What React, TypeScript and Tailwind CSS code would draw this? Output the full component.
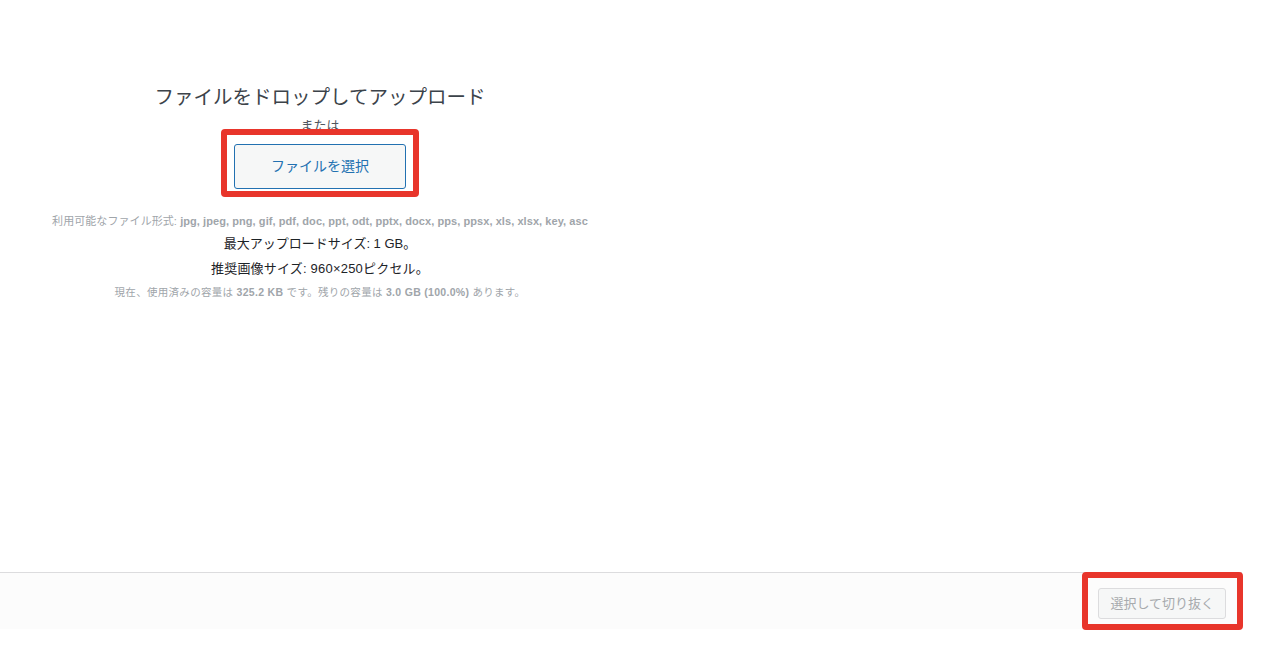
const font = "font-['Liberation_Sans','Noto_Sans_CJK_JP',sans-serif]";

const Mark = ({ className }: { className: string }) => (
  <span
    className={`pointer-events-none absolute rounded-[4px] border-[6px] border-[#e8352b] ${className}`}
  />
);

export default function App() {
  return (
    <div className={`relative h-[652px] w-[1266px] bg-white ${font}`}>
      <div className="flex h-[572px] w-[640px] flex-col items-center pt-[84px] text-center">
        <h2 className="text-[19.5px] leading-[26px] text-[#3c434a]">
          ファイルをドロップしてアップロード
        </h2>
        <p className="mt-[8px] text-[13px] leading-[16px] text-[#50575e]">または</p>
        <div className="relative mt-[10px]">
          <button className="h-[45px] rounded-[3px] border border-[#2271b1] bg-[#f6f7f7] px-[36px] text-[14px] text-[#2271b1]">
            ファイルを選択
          </button>
          <Mark className="-left-[13px] -right-[13px] -top-[15px] -bottom-[8px]" />
        </div>
        <p className="mt-[25px] text-[11px] leading-[14px] tracking-[0.07px] text-[#a0a5aa]">
          利用可能なファイル形式:{" "}
          <span className="font-semibold">
            jpg, jpeg, png, gif, pdf, doc, ppt, odt, pptx, docx, pps, ppsx, xls, xlsx, key, asc
          </span>
        </p>
        <p className="mt-[8px] text-[13px] leading-[16px] text-[#1d2327]">
          最大アップロードサイズ: 1 GB。
        </p>
        <p className="mt-[9px] text-[13px] leading-[16px] tracking-[0.2px] text-[#1d2327]">
          推奨画像サイズ: 960×250ピクセル。
        </p>
        <p className="mt-[9px] text-[10.5px] leading-[13px] tracking-[0.3px] text-[#a0a5aa]">
          現在、使用済みの容量は <span className="font-semibold">325.2 KB</span>{" "}
          です。残りの容量は <span className="font-semibold">3.0 GB (100.0%)</span> あります。
        </p>
      </div>
      <div className="flex h-[57px] w-[1242px] justify-end border-t border-[#dcdcde] bg-[#fcfcfc] pr-[16px] pt-[15px]">
        <div className="relative h-[31px]">
          <button
            disabled
            className="h-[31px] rounded-[3px] border border-[#dcdcde] bg-[#f6f7f7] px-[11px] text-[13px] text-[#a7aaad]"
          >
            選択して切り抜く
          </button>
          <Mark className="-left-[16px] -right-[17px] -top-[16px] -bottom-[11px]" />
        </div>
      </div>
    </div>
  );
}
